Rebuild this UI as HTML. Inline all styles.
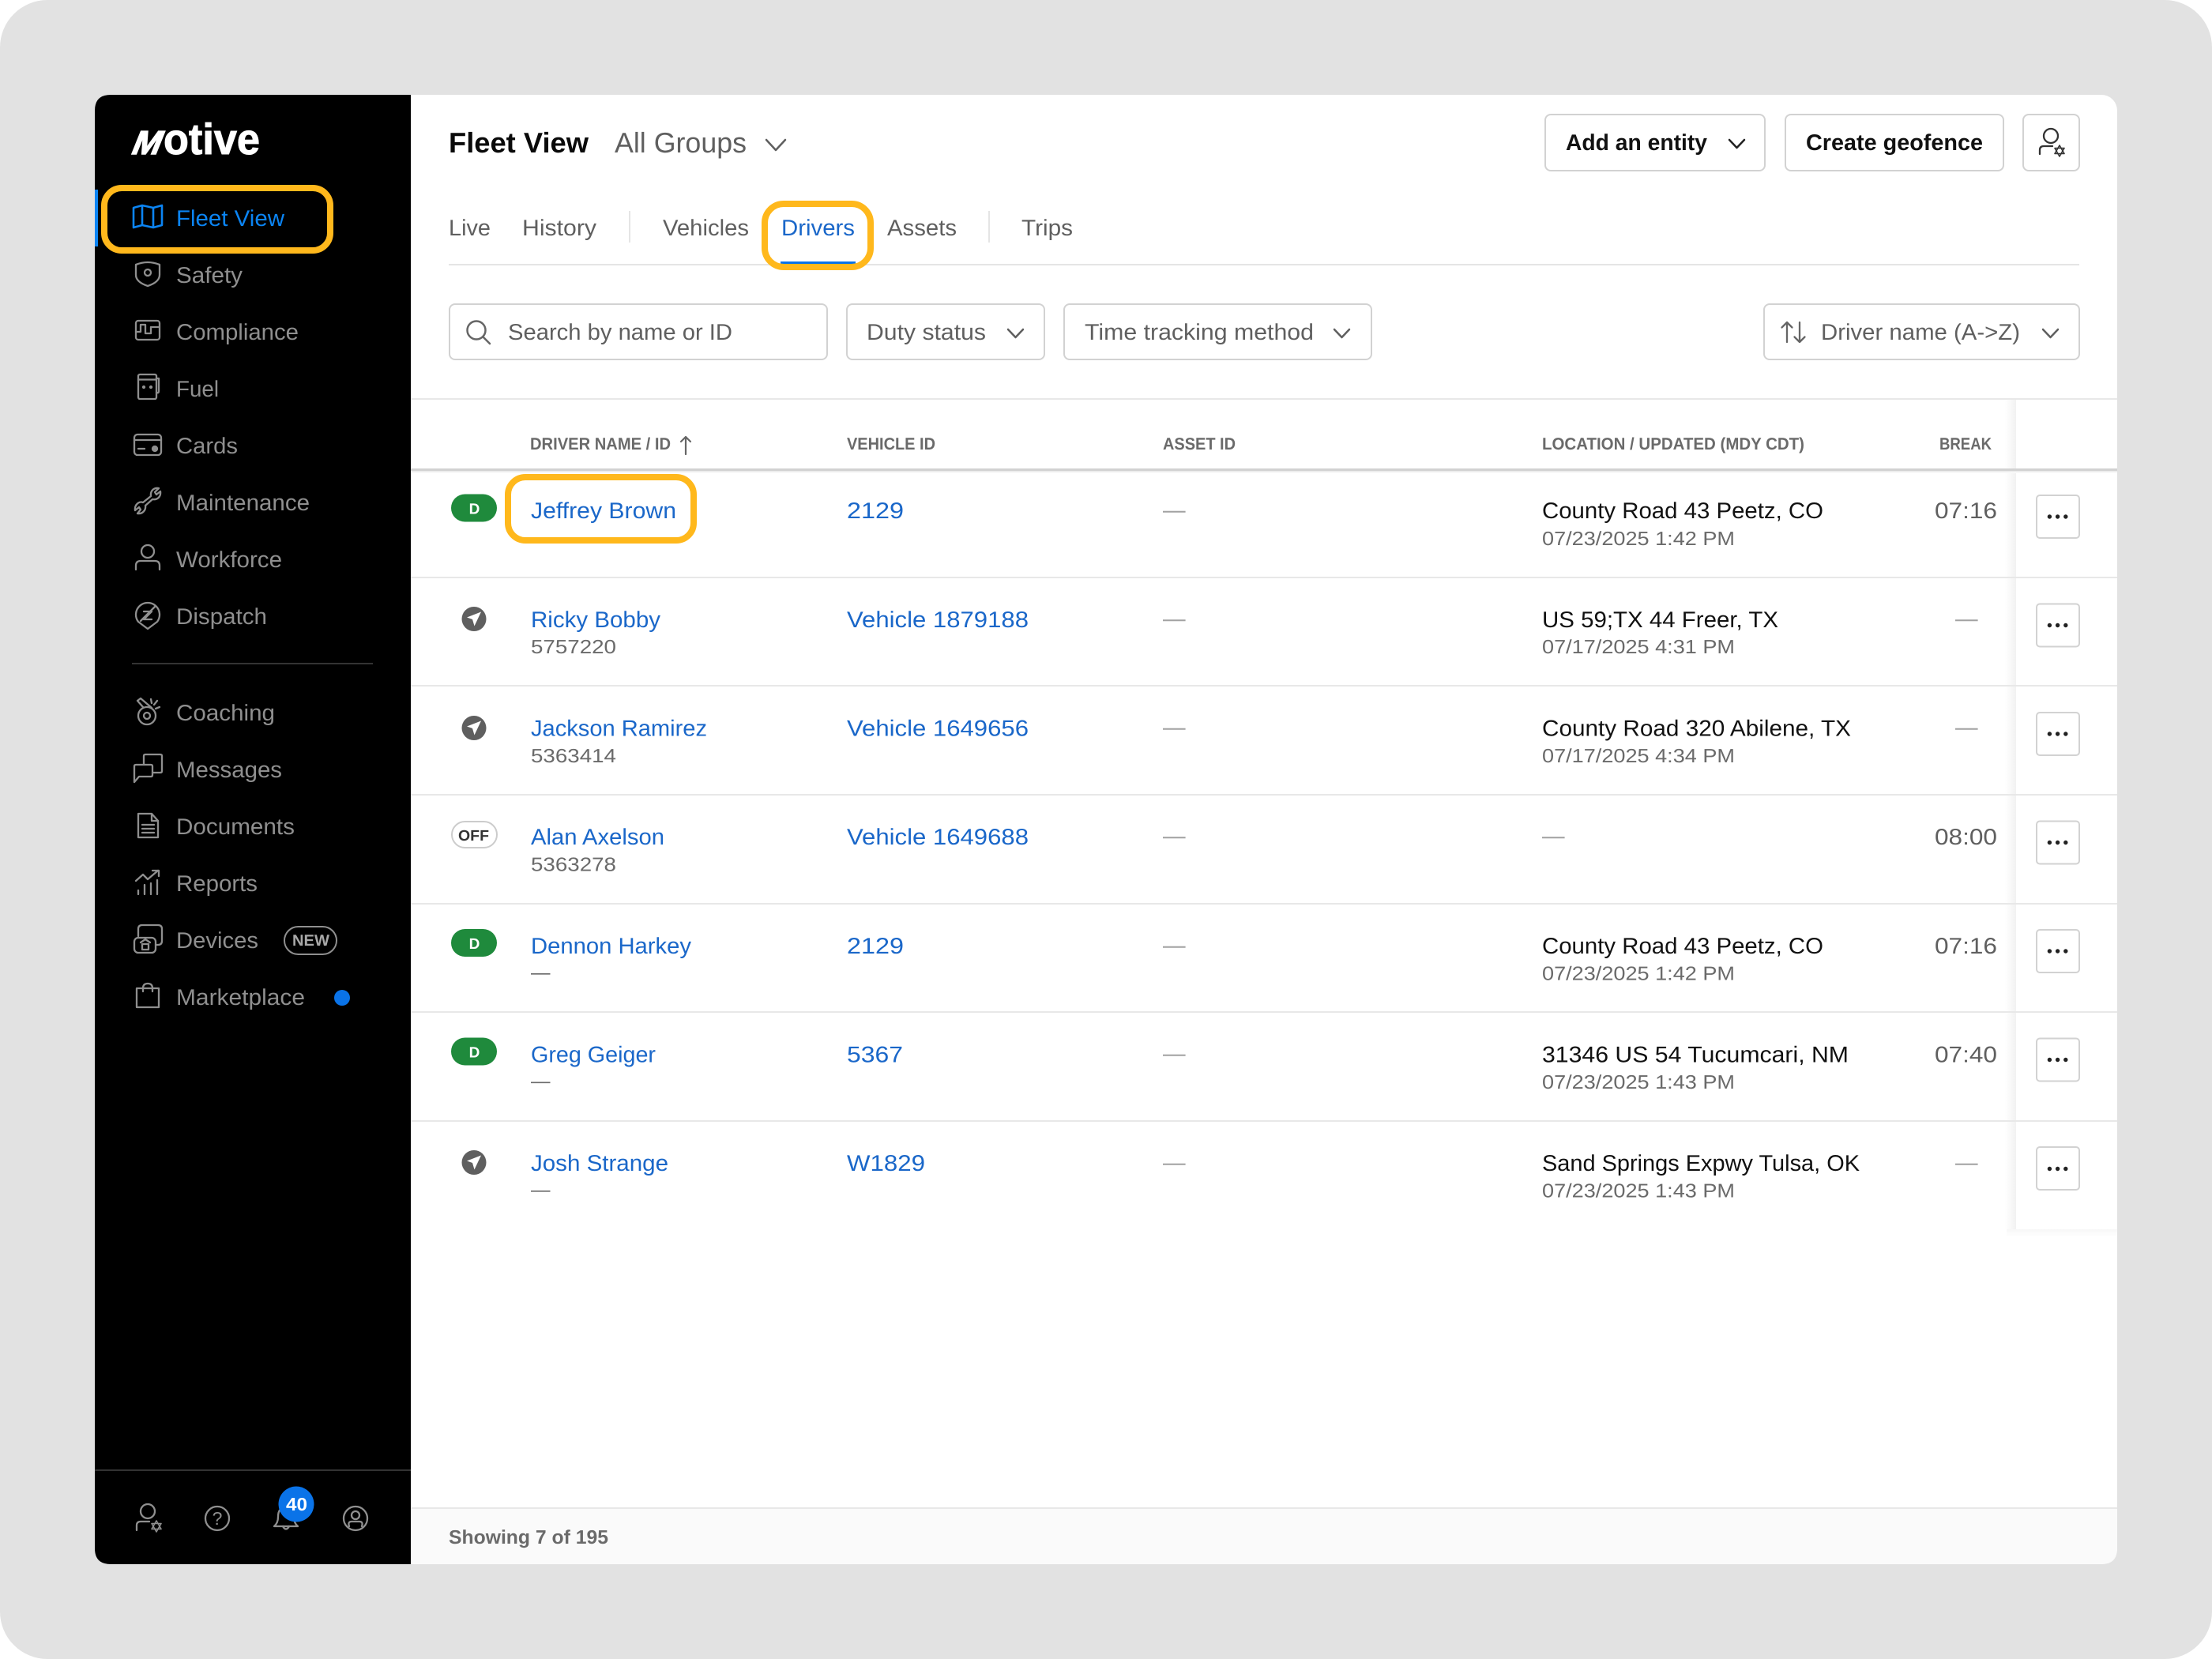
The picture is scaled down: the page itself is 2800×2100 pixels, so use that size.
<!DOCTYPE html>
<html lang="en">
<head>
<meta charset="utf-8">
<title>Fleet View - Motive</title>
<style>
html,body{margin:0;padding:0;background:#fff;width:2800px;height:2100px;overflow:hidden}
svg{display:block;font-family:"Liberation Sans",Arial,sans-serif}
text{text-rendering:geometricPrecision}
.n{font-size:28.6px;fill:#8f8f8f}
.t{font-size:28.6px;fill:#5f5f5f}
.l{font-size:28.6px;fill:#1a67c9}
.b{font-size:28.6px;fill:#111}
.sub{font-size:24.5px;fill:#6a6a6a}
.h{font-size:21.4px;font-weight:bold;fill:#6a6a6a}
.d{font-size:28.6px;fill:#a2a2a2}
.btn{font-size:28.6px;font-weight:bold;fill:#111}
.box{fill:#fff;stroke:#d2d2d2;stroke-width:2}
.ic{fill:none;stroke:#8f8f8f;stroke-width:2.3;stroke-linecap:round;stroke-linejoin:round}
.chev{fill:none;stroke:#5f5f5f;stroke-width:2.5;stroke-linecap:round;stroke-linejoin:round}
.hl{fill:none;stroke:#ffb81c;stroke-width:8}
.rl{fill:#e8e8e8}
</style>
</head>
<body>
<svg xmlns="http://www.w3.org/2000/svg" width="2800" height="2100" viewBox="0 0 2800 2100">
<defs>
<linearGradient id="sh" x1="0" x2="1" y1="0" y2="0"><stop offset="0" stop-color="#f2f2f2" stop-opacity="0"/><stop offset="1" stop-color="#f1f1f1"/></linearGradient>
<linearGradient id="sb" x1="0" x2="0" y1="0" y2="1"><stop offset="0" stop-color="#f7f7f7"/><stop offset="1" stop-color="#fff"/></linearGradient>
<linearGradient id="hs" x1="0" x2="0" y1="0" y2="1"><stop offset="0" stop-color="#e6e6e6"/><stop offset="1" stop-color="#fff"/></linearGradient>
</defs>

<!-- frame -->
<rect x="0" y="0" width="2800" height="2100" rx="60" fill="#e2e2e2"/>
<rect x="120" y="120" width="2560" height="1860" rx="20" fill="#fff"/>

<!-- sidebar -->
<path d="M140 120H520V1980H140Q120 1980 120 1960V140Q120 120 140 120Z" fill="#000"/>
<text transform="translate(164,195) skewX(-22)" font-size="42" font-weight="bold" fill="#fff" stroke="#fff" stroke-width="1.5" textLength="36" lengthAdjust="spacingAndGlyphs">M</text>
<text x="207" y="195" font-size="55" font-weight="bold" fill="#fff" stroke="#fff" stroke-width="1" textLength="122" lengthAdjust="spacingAndGlyphs">otive</text>

<rect x="120" y="240" width="4" height="72" fill="#0b84f3"/>
<g transform="translate(187,274)" fill="none" stroke="#0b84f3" stroke-width="2.6" stroke-linejoin="round">
<path d="M-18,-11 L-7,-14 L7,-11 L18,-14 V11 L7,14 L-7,11 L-18,14 Z"/><path d="M-7,-14 V11"/><path d="M7,-11 V14"/>
</g>
<text x="223" y="286" font-size="28.6" fill="#0b84f3" textLength="137" lengthAdjust="spacingAndGlyphs">Fleet View</text>

<g class="ic" transform="translate(187,347)"><path d="M-15,-12 Q0,-18 15,-12 V1 Q15,10 0,15 Q-15,10 -15,1 Z"/><circle cx="0" cy="-2" r="4"/></g>
<text class="n" x="223" y="358" textLength="84" lengthAdjust="spacingAndGlyphs">Safety</text>

<g class="ic" transform="translate(187,418)"><rect x="-15" y="-12" width="30" height="24" rx="3"/><path d="M-15,2 H-9 V-7 H-3 V4 H4 V-4 H15"/></g>
<text class="n" x="223" y="430" textLength="155" lengthAdjust="spacingAndGlyphs">Compliance</text>

<g class="ic" transform="translate(187,489)"><rect x="-12" y="-15" width="23" height="31" rx="2"/><path d="M-12,-8.5 H11"/><path d="M11,-10 H14 V6 Q14,9 11,8"/><circle cx="-5" cy="1" r="1" fill="#8f8f8f"/><circle cx="4" cy="1" r="1" fill="#8f8f8f"/></g>
<text class="n" x="223" y="502" textLength="54" lengthAdjust="spacingAndGlyphs">Fuel</text>

<g class="ic" transform="translate(187,563)"><rect x="-17" y="-13" width="34" height="26" rx="4"/><path d="M-17,-6 H17"/><path d="M-12,5 H-4"/><circle cx="9" cy="5" r="3" fill="#8f8f8f"/></g>
<text class="n" x="223" y="574" textLength="78" lengthAdjust="spacingAndGlyphs">Cards</text>

<g class="ic" transform="translate(187,634)"><path d="M4,-6 C3,-13 8,-17 14,-16 L9,-11 L11,-8 L16,-12 C17,-5 12,-1 6,-2 L-3,6 C-2,12 -7,17 -13,16 L-9,11 L-11,8 L-16,12 C-17,5 -11,0 -6,2 Z"/></g>
<text class="n" x="223" y="646" textLength="169" lengthAdjust="spacingAndGlyphs">Maintenance</text>

<g class="ic" transform="translate(187,705)"><circle cx="0" cy="-7" r="8"/><path d="M-15,16 V11 Q-15,5 -9,5 H9 Q15,5 15,11 V16"/></g>
<text class="n" x="223" y="718" textLength="134" lengthAdjust="spacingAndGlyphs">Workforce</text>

<g class="ic" transform="translate(187,778)"><path d="M0,18 L-12,9 A15,15 0 1 1 12,9 Z"/><path d="M-5,-4 H5 L-5,6 H5"/><path d="M-9,8 L9,-10"/></g>
<text class="n" x="223" y="790" textLength="115" lengthAdjust="spacingAndGlyphs">Dispatch</text>

<rect x="167" y="839" width="305" height="2" fill="#333"/>

<g class="ic" transform="translate(187,900)"><circle cx="-1" cy="6" r="11"/><circle cx="-1" cy="6" r="4"/><path d="M-6,-5 L-13,-13 L-9,-16 L5,-4"/><path d="M4,-15 L5,-10"/><path d="M12,-13 L8,-8"/><path d="M15,-5 L10,-3"/></g>
<text class="n" x="223" y="912" textLength="125" lengthAdjust="spacingAndGlyphs">Coaching</text>

<g class="ic" transform="translate(187,972)"><path d="M-5,-4 V-15 Q-5,-17 -3,-17 H16 Q18,-17 18,-15 V4 Q18,6 16,6 H6"/><path d="M-17,18 V-2 Q-17,-4 -15,-4 H4 Q6,-4 6,-2 V9 Q6,11 4,11 H-11 Z"/></g>
<text class="n" x="223" y="984" textLength="134" lengthAdjust="spacingAndGlyphs">Messages</text>

<g class="ic" transform="translate(187,1045)"><path d="M-12,-15 H5 L13,-6 V15 H-12 Z"/><path d="M5,-15 V-6 H13"/><path d="M-7,-1 H8 M-7,4 H8 M-7,9 H8"/></g>
<text class="n" x="223" y="1056" textLength="150" lengthAdjust="spacingAndGlyphs">Documents</text>

<g class="ic" transform="translate(187,1117)"><path d="M-12,15 V10 M-4,15 V3 M4,15 V1 M12,15 V-3"/><path d="M-15,-2 L-6,-10 L0,-4 L13,-15"/><path d="M6,-15 H14 V-8"/></g>
<text class="n" x="223" y="1128" textLength="103" lengthAdjust="spacingAndGlyphs">Reports</text>

<g class="ic" transform="translate(187,1188)"><path d="M-12,-3 V-12 Q-12,-17 -7,-17 H13 Q18,-17 18,-12 V3 Q18,8 13,8 H10"/><rect x="-17" y="-1" width="27" height="19" rx="5"/><rect x="-7" y="7" width="8" height="7"/><path d="M-9,5 L-3,1 L3,5"/></g>
<text class="n" x="223" y="1200" textLength="104" lengthAdjust="spacingAndGlyphs">Devices</text>
<rect x="360" y="1173" width="66" height="35" rx="17.5" fill="none" stroke="#8f8f8f" stroke-width="2"/>
<text x="370" y="1197" font-size="20" font-weight="bold" fill="#a8a8a8" textLength="47" lengthAdjust="spacingAndGlyphs">NEW</text>

<g class="ic" transform="translate(187,1260)"><path d="M-14,-9 H14 V15 H-14 Z"/><path d="M-6,-9 V-5 M6,-9 V-5"/><path d="M-6,-9 Q-6,-15 0,-15 Q6,-15 6,-9"/></g>
<text class="n" x="223" y="1272" textLength="163" lengthAdjust="spacingAndGlyphs">Marketplace</text>
<circle cx="433" cy="1263" r="10" fill="#0a73e8"/>

<rect x="120" y="1860" width="400" height="2" fill="#333"/>
<g class="ic" transform="translate(187,1913)"><circle cx="0" cy="0" r="9"/><path d="M-14,24 V18 Q-14,13 -9,13 H2"/><g stroke-width="1.6"><path d="M11,12 L17,22.5 H5 Z"/><path d="M11,26 L17,15.5 H5 Z"/></g></g>
<g class="ic"><circle cx="275" cy="1922" r="15"/></g>
<text x="275" y="1930" font-size="23" fill="#8f8f8f" text-anchor="middle">?</text>
<g class="ic" transform="translate(362,1922)"><path d="M-15,10 Q-10,6 -10,-2 Q-10,-14 0,-14 Q10,-14 10,-2 Q10,6 15,10 Z"/><path d="M-4,10 Q0,17 4,10"/></g>
<circle cx="375" cy="1904" r="22.5" fill="#0a73e8"/>
<text x="362" y="1912" font-size="23" font-weight="bold" fill="#fff" textLength="27" lengthAdjust="spacingAndGlyphs">40</text>
<g class="ic" transform="translate(450,1922)"><circle cx="0" cy="0" r="15"/><circle cx="0" cy="-4" r="5"/><path d="M-8,10 Q-10,4 -5,4 H5 Q10,4 8,10"/></g>

<!-- page header -->
<text x="568" y="193" font-size="36" font-weight="bold" fill="#0a0a0a" textLength="177" lengthAdjust="spacingAndGlyphs">Fleet View</text>
<text x="778" y="193" font-size="36" fill="#5f5f5f" textLength="167" lengthAdjust="spacingAndGlyphs">All Groups</text>
<path class="chev" d="M970,177 L982,190 L994,177"/>

<rect class="box" x="1956" y="145" width="278" height="71" rx="7"/>
<text class="btn" x="1982" y="190" textLength="179" lengthAdjust="spacingAndGlyphs">Add an entity</text>
<path d="M2189,177 L2198.500,187 L2208,177" fill="none" stroke="#222" stroke-width="2.5" stroke-linecap="round" stroke-linejoin="round"/>
<rect class="box" x="2260" y="145" width="276" height="71" rx="7"/>
<text class="btn" x="2286" y="190" textLength="224" lengthAdjust="spacingAndGlyphs">Create geofence</text>
<rect class="box" x="2561" y="145" width="71" height="71" rx="7"/>
<g transform="translate(2596,172)" fill="none" stroke="#333" stroke-width="2.3" stroke-linecap="round" stroke-linejoin="round"><circle cx="0" cy="0" r="9"/><path d="M-14,23 V18 Q-14,13 -9,13 H2"/><g stroke-width="1.6"><path d="M11,12 L17,22.500 H5 Z"/><path d="M11,26 L17,15.500 H5 Z"/></g></g>

<!-- tabs -->
<text class="t" x="568" y="298" textLength="53" lengthAdjust="spacingAndGlyphs">Live</text>
<text class="t" x="661" y="298" textLength="94" lengthAdjust="spacingAndGlyphs">History</text>
<rect x="796" y="267" width="2" height="40" fill="#e5e5e5"/>
<text class="t" x="839" y="298" textLength="109" lengthAdjust="spacingAndGlyphs">Vehicles</text>
<text x="989" y="298" font-size="28.6" fill="#1a67c9" textLength="93" lengthAdjust="spacingAndGlyphs">Drivers</text>
<text class="t" x="1123" y="298" textLength="88" lengthAdjust="spacingAndGlyphs">Assets</text>
<rect x="1251" y="267" width="2" height="40" fill="#e5e5e5"/>
<text class="t" x="1293" y="298" textLength="65" lengthAdjust="spacingAndGlyphs">Trips</text>
<rect x="568" y="334" width="2064" height="2" fill="#e5e5e5"/>
<rect x="988" y="331" width="95" height="5" fill="#0a73e8"/>

<!-- filters -->
<rect class="box" x="569" y="385" width="478" height="70" rx="7"/>
<g fill="none" stroke="#666" stroke-width="2.5" stroke-linecap="round"><circle cx="603" cy="418" r="11.500"/><path d="M611.500,426.500 L620,435"/></g>
<text class="t" x="643" y="430" textLength="284" lengthAdjust="spacingAndGlyphs">Search by name or ID</text>
<rect class="box" x="1072" y="385" width="250" height="70" rx="7"/>
<text class="t" x="1097" y="430" textLength="151" lengthAdjust="spacingAndGlyphs">Duty status</text>
<path class="chev" d="M1276,417 L1285.500,427 L1295,417"/>
<rect class="box" x="1347" y="385" width="389" height="70" rx="7"/>
<text class="t" x="1373" y="430" textLength="290" lengthAdjust="spacingAndGlyphs">Time tracking method</text>
<path class="chev" d="M1689,417 L1698.500,427 L1708,417"/>
<rect class="box" x="2233" y="385" width="399" height="70" rx="7"/>
<g fill="none" stroke="#666" stroke-width="2.300" stroke-linecap="round" stroke-linejoin="round"><path d="M2262,433 V408 M2255.500,414.500 L2262,408 L2268.500,414.500"/><path d="M2278,408 V433 M2271.500,426.500 L2278,433 L2284.500,426.500"/></g>
<text class="t" x="2305" y="430" textLength="252" lengthAdjust="spacingAndGlyphs">Driver name (A-&gt;Z)</text>
<path class="chev" d="M2586,417 L2595.500,427 L2605,417"/>

<!-- sticky column shadow -->
<rect x="2538" y="506" width="14" height="1050" fill="url(#sh)"/>
<rect x="2540" y="1556" width="140" height="10" fill="url(#sb)"/>

<!-- table lines -->
<rect x="520" y="504" width="2160" height="2" fill="#e8e8e8"/>
<rect x="520" y="593" width="2160" height="3" fill="#d2d2d2"/>
<rect x="520" y="596" width="2160" height="3" fill="url(#hs)"/>
<rect class="rl" x="520" y="730" width="2160" height="2"/>
<rect class="rl" x="520" y="867" width="2160" height="2"/>
<rect class="rl" x="520" y="1005" width="2160" height="2"/>
<rect class="rl" x="520" y="1143" width="2160" height="2"/>
<rect class="rl" x="520" y="1280" width="2160" height="2"/>
<rect class="rl" x="520" y="1418" width="2160" height="2"/>

<!-- table head -->
<text class="h" x="671" y="569" textLength="178" lengthAdjust="spacingAndGlyphs">DRIVER NAME / ID</text>
<path d="M868,575 V553 M862,559 L868,553 L874,559" fill="none" stroke="#666" stroke-width="2.200" stroke-linecap="round" stroke-linejoin="round"/>
<text class="h" x="1072" y="569" textLength="112" lengthAdjust="spacingAndGlyphs">VEHICLE ID</text>
<text class="h" x="1472" y="569" textLength="92" lengthAdjust="spacingAndGlyphs">ASSET ID</text>
<text class="h" x="1952" y="569" textLength="332" lengthAdjust="spacingAndGlyphs">LOCATION / UPDATED (MDY CDT)</text>
<text class="h" x="2455" y="569" textLength="66" lengthAdjust="spacingAndGlyphs">BREAK</text>

<!-- row 1 -->
<rect x="571" y="625.500" width="58" height="35" rx="17.500" fill="#1f8a3c"/>
<text x="600.500" y="650.500" font-size="19" font-weight="bold" fill="#fff" text-anchor="middle">D</text>
<text class="l" x="672" y="656" textLength="184" lengthAdjust="spacingAndGlyphs">Jeffrey Brown</text>
<text class="l" x="1072" y="656" textLength="72" lengthAdjust="spacingAndGlyphs">2129</text>
<text class="d" x="1472" y="655">—</text>
<text class="b" x="1952" y="656" textLength="356" lengthAdjust="spacingAndGlyphs">County Road 43 Peetz, CO</text>
<text class="sub" x="1952" y="690" textLength="244" lengthAdjust="spacingAndGlyphs">07/23/2025 1:42 PM</text>
<text class="t" x="2449" y="656" textLength="79" lengthAdjust="spacingAndGlyphs">07:16</text>
<rect class="box" x="2578" y="627" width="54" height="54" rx="4"/>
<g fill="#222"><circle cx="2594.400" cy="654" r="2.700"/><circle cx="2604.600" cy="654" r="2.700"/><circle cx="2614.800" cy="654" r="2.700"/></g>

<!-- row 2 -->
<circle cx="600" cy="783.500" r="15.500" fill="#5f5f5f"/>
<path d="M609,774.500 L591,781.500 L598,784 L600.500,792.500 Z" fill="#fff"/>
<text class="l" x="672" y="794" textLength="164" lengthAdjust="spacingAndGlyphs">Ricky Bobby</text>
<text class="sub" x="672" y="827" textLength="108" lengthAdjust="spacingAndGlyphs">5757220</text>
<text class="l" x="1072" y="794" textLength="230" lengthAdjust="spacingAndGlyphs">Vehicle 1879188</text>
<text class="d" x="1472" y="792.500">—</text>
<text class="b" x="1952" y="794" textLength="299" lengthAdjust="spacingAndGlyphs">US 59;TX 44 Freer, TX</text>
<text class="sub" x="1952" y="827" textLength="244" lengthAdjust="spacingAndGlyphs">07/17/2025 4:31 PM</text>
<text class="d" x="2475" y="792.500">—</text>
<rect class="box" x="2578" y="764.500" width="54" height="54" rx="4"/>
<g fill="#222"><circle cx="2594.400" cy="791.500" r="2.700"/><circle cx="2604.600" cy="791.500" r="2.700"/><circle cx="2614.800" cy="791.500" r="2.700"/></g>

<!-- row 3 -->
<circle cx="600" cy="921.500" r="15.500" fill="#5f5f5f"/>
<path d="M609,912.500 L591,919.500 L598,922 L600.500,930.500 Z" fill="#fff"/>
<text class="l" x="672" y="931.500" textLength="223" lengthAdjust="spacingAndGlyphs">Jackson Ramirez</text>
<text class="sub" x="672" y="965" textLength="108" lengthAdjust="spacingAndGlyphs">5363414</text>
<text class="l" x="1072" y="931.500" textLength="230" lengthAdjust="spacingAndGlyphs">Vehicle 1649656</text>
<text class="d" x="1472" y="930">—</text>
<text class="b" x="1952" y="931.500" textLength="391" lengthAdjust="spacingAndGlyphs">County Road 320 Abilene, TX</text>
<text class="sub" x="1952" y="965" textLength="244" lengthAdjust="spacingAndGlyphs">07/17/2025 4:34 PM</text>
<text class="d" x="2475" y="930">—</text>
<rect class="box" x="2578" y="902" width="54" height="54" rx="4"/>
<g fill="#222"><circle cx="2594.400" cy="929" r="2.700"/><circle cx="2604.600" cy="929" r="2.700"/><circle cx="2614.800" cy="929" r="2.700"/></g>

<!-- row 4 -->
<rect x="572" y="1040" width="57" height="33" rx="16.500" fill="#fff" stroke="#ccc" stroke-width="2"/>
<text x="580" y="1064" font-size="19" font-weight="bold" fill="#333" textLength="39" lengthAdjust="spacingAndGlyphs">OFF</text>
<text class="l" x="672" y="1069" textLength="169" lengthAdjust="spacingAndGlyphs">Alan Axelson</text>
<text class="sub" x="672" y="1102.500" textLength="108" lengthAdjust="spacingAndGlyphs">5363278</text>
<text class="l" x="1072" y="1069" textLength="230" lengthAdjust="spacingAndGlyphs">Vehicle 1649688</text>
<text class="d" x="1472" y="1067.500">—</text>
<text class="d" x="1952" y="1067.500">—</text>
<text class="t" x="2449" y="1069" textLength="79" lengthAdjust="spacingAndGlyphs">08:00</text>
<rect class="box" x="2578" y="1039.500" width="54" height="54" rx="4"/>
<g fill="#222"><circle cx="2594.400" cy="1066.500" r="2.700"/><circle cx="2604.600" cy="1066.500" r="2.700"/><circle cx="2614.800" cy="1066.500" r="2.700"/></g>

<!-- row 5 -->
<rect x="571" y="1176" width="58" height="35" rx="17.500" fill="#1f8a3c"/>
<text x="600.500" y="1201" font-size="19" font-weight="bold" fill="#fff" text-anchor="middle">D</text>
<text class="l" x="672" y="1207" textLength="203" lengthAdjust="spacingAndGlyphs">Dennon Harkey</text>
<text class="sub" x="672" y="1239" fill="#a2a2a2">—</text>
<text class="l" x="1072" y="1207" textLength="72" lengthAdjust="spacingAndGlyphs">2129</text>
<text class="d" x="1472" y="1206">—</text>
<text class="b" x="1952" y="1207" textLength="356" lengthAdjust="spacingAndGlyphs">County Road 43 Peetz, CO</text>
<text class="sub" x="1952" y="1240.500" textLength="244" lengthAdjust="spacingAndGlyphs">07/23/2025 1:42 PM</text>
<text class="t" x="2449" y="1207" textLength="79" lengthAdjust="spacingAndGlyphs">07:16</text>
<rect class="box" x="2578" y="1177" width="54" height="54" rx="4"/>
<g fill="#222"><circle cx="2594.400" cy="1204" r="2.700"/><circle cx="2604.600" cy="1204" r="2.700"/><circle cx="2614.800" cy="1204" r="2.700"/></g>

<!-- row 6 -->
<rect x="571" y="1313.500" width="58" height="35" rx="17.500" fill="#1f8a3c"/>
<text x="600.500" y="1338.500" font-size="19" font-weight="bold" fill="#fff" text-anchor="middle">D</text>
<text class="l" x="672" y="1344.500" textLength="158" lengthAdjust="spacingAndGlyphs">Greg Geiger</text>
<text class="sub" x="672" y="1376.500" fill="#a2a2a2">—</text>
<text class="l" x="1072" y="1344.500" textLength="71" lengthAdjust="spacingAndGlyphs">5367</text>
<text class="d" x="1472" y="1343">—</text>
<text class="b" x="1952" y="1344.500" textLength="388" lengthAdjust="spacingAndGlyphs">31346 US 54 Tucumcari, NM</text>
<text class="sub" x="1952" y="1378" textLength="244" lengthAdjust="spacingAndGlyphs">07/23/2025 1:43 PM</text>
<text class="t" x="2449" y="1344.500" textLength="79" lengthAdjust="spacingAndGlyphs">07:40</text>
<rect class="box" x="2578" y="1314.500" width="54" height="54" rx="4"/>
<g fill="#222"><circle cx="2594.400" cy="1341.500" r="2.700"/><circle cx="2604.600" cy="1341.500" r="2.700"/><circle cx="2614.800" cy="1341.500" r="2.700"/></g>

<!-- row 7 -->
<circle cx="600" cy="1471.500" r="15.500" fill="#5f5f5f"/>
<path d="M609,1462.500 L591,1469.500 L598,1472 L600.500,1480.500 Z" fill="#fff"/>
<text class="l" x="672" y="1482" textLength="174" lengthAdjust="spacingAndGlyphs">Josh Strange</text>
<text class="sub" x="672" y="1514" fill="#a2a2a2">—</text>
<text class="l" x="1072" y="1482" textLength="99" lengthAdjust="spacingAndGlyphs">W1829</text>
<text class="d" x="1472" y="1481">—</text>
<text class="b" x="1952" y="1482" textLength="402" lengthAdjust="spacingAndGlyphs">Sand Springs Expwy Tulsa, OK</text>
<text class="sub" x="1952" y="1515.500" textLength="244" lengthAdjust="spacingAndGlyphs">07/23/2025 1:43 PM</text>
<text class="d" x="2475" y="1481">—</text>
<rect class="box" x="2578" y="1452" width="54" height="54" rx="4"/>
<g fill="#222"><circle cx="2594.400" cy="1479.500" r="2.700"/><circle cx="2604.600" cy="1479.500" r="2.700"/><circle cx="2614.800" cy="1479.500" r="2.700"/></g>

<!-- footer -->
<path d="M520 1908H2680V1960Q2680 1980 2660 1980H520Z" fill="#fafafa"/>
<rect x="520" y="1908" width="2160" height="2" fill="#e8e8e8"/>
<text x="568" y="1954" font-size="24.500" font-weight="bold" fill="#6a6a6a" textLength="202" lengthAdjust="spacingAndGlyphs">Showing 7 of 195</text>

<!-- highlights -->
<rect class="hl" x="132" y="238" width="286" height="79" rx="22"/>
<rect class="hl" x="968" y="258" width="134" height="80" rx="24"/>
<rect class="hl" x="643" y="604" width="235" height="80" rx="22"/>
</svg>
</body>
</html>
